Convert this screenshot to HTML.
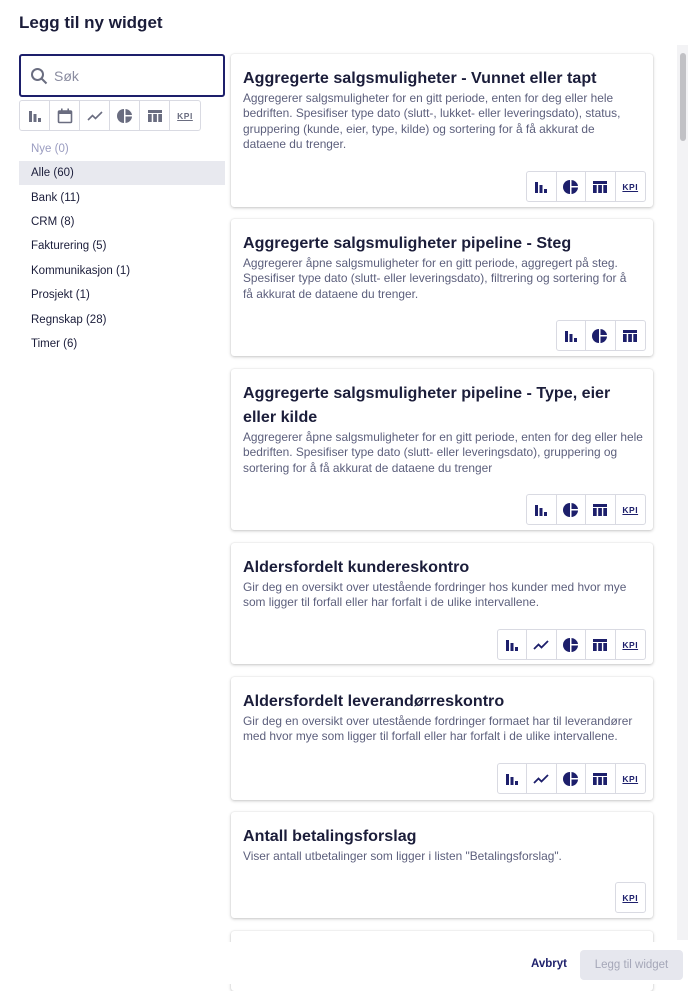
<!DOCTYPE html>
<html><head><meta charset="utf-8"><style>
*{box-sizing:border-box;margin:0;padding:0}
body{width:688px;height:984px;overflow:hidden;background:#fff;font-family:"Liberation Sans",sans-serif;position:relative;color:#1b1d3a}
h1{position:absolute;left:19px;top:13px;font-size:17px;font-weight:bold;color:#1b1d3a}
.search{position:absolute;left:19px;top:54px;width:206px;height:43px;border:2px solid #1d1f6b;border-radius:3px}
.search span{position:absolute;left:33px;top:12px;font-size:14px;color:#8a8ca0}
.filt{position:absolute;left:19px;top:100px;height:31px;display:flex;border:1px solid #d9dae2;border-radius:3px}
.filt div{width:30px;height:29px;border-right:1px solid #d9dae2;display:flex;align-items:center;justify-content:center}
.filt div:last-child{border-right:none}
.cat{position:absolute;left:19px;width:206px;height:24px;font-size:11.5px;padding:6px 12px;color:#1b1d3a}
.card{position:absolute;left:231px;width:422px;background:#fff;border-radius:3px;box-shadow:0 1px 3px rgba(0,0,0,.22),0 0 1px rgba(0,0,0,.15)}
.card h2{position:absolute;left:12px;font-size:16.1px;font-weight:bold;line-height:24px;color:#1b1d3a;width:400px;white-space:nowrap}
.card p{position:absolute;left:12px;font-size:11.9px;line-height:15.3px;color:#5c5f7c;width:410px;white-space:nowrap}
.ic{position:absolute;right:7px;height:31px;display:flex;border:1px solid #d9dae2;border-radius:3px}
.ic div{width:29.5px;height:29px;border-right:1px solid #d9dae2;display:flex;align-items:center;justify-content:center}
.ic div:last-child{border-right:none}
.kpi{font-size:8.5px;font-weight:bold;text-decoration:underline;letter-spacing:.5px;color:#1d1f6b}
.g .kpi{color:#6a6d80}
.sb{position:absolute;left:677px;top:45px;width:11px;height:895px;background:#f3f3f5}
.sb i{position:absolute;left:3px;top:8px;width:6px;height:88px;background:#c1c1c5;border-radius:3px}
.foot{position:absolute;left:0;top:942px;width:688px;height:42px;background:#fff}
</style></head><body>
<h1>Legg til ny widget</h1>
<div class="search"><svg style="position:absolute;left:9px;top:11px" width="18" height="18" viewBox="0 0 18 18"><circle cx="7.5" cy="7.5" r="5.5" fill="none" stroke="#6a6d80" stroke-width="2"/><path d="M11.5 11.5l5 5" stroke="#6a6d80" stroke-width="2"/></svg><span>Søk</span></div>
<div class="filt g">
<div><svg width="14" height="14" viewBox="0 0 14 14" fill="#6a6d80"><rect x="1" y="2" width="3" height="11"/><rect x="5.5" y="5" width="3" height="8"/><rect x="10" y="9" width="3" height="4"/></svg></div>
<div><svg width="16" height="16" viewBox="0 0 16 16"><rect x="1.5" y="3" width="13" height="11.5" rx="1" fill="none" stroke="#6a6d80" stroke-width="1.6"/><rect x="1.5" y="3" width="13" height="3" fill="#6a6d80"/><rect x="4" y="0.5" width="1.6" height="3" fill="#6a6d80"/><rect x="10.4" y="0.5" width="1.6" height="3" fill="#6a6d80"/></svg></div>
<div><svg width="16" height="12" viewBox="0 0 16 12"><path d="M1 10l4.5-4.5 3 3L15 2" fill="none" stroke="#6a6d80" stroke-width="1.6"/></svg></div>
<div><svg width="16" height="16" viewBox="0 0 16 16" fill="#6a6d80"><path d="M7 1A7 7 0 1 0 7 15Z"/><path d="M8.5 1A7 7 0 0 1 15 7H8.5Z"/><path d="M8.5 8.5H15A7 7 0 0 1 8.5 15Z"/></svg></div>
<div><svg width="16" height="14" viewBox="0 0 16 14" fill="#6a6d80"><rect x="1" y="1" width="14" height="3"/><rect x="1" y="5" width="3.7" height="8"/><rect x="6.2" y="5" width="3.7" height="8"/><rect x="11.3" y="5" width="3.7" height="8"/></svg></div>
<div><span class="kpi">KPI</span></div>
</div>
<div class="cat" style="top:137px;color:#9a9cc0">Nye (0)</div>
<div class="cat" style="top:161px;background:#e8e9ef">Alle (60)</div>
<div class="cat" style="top:186px">Bank (11)</div>
<div class="cat" style="top:210px">CRM (8)</div>
<div class="cat" style="top:234px">Fakturering (5)</div>
<div class="cat" style="top:259px">Kommunikasjon (1)</div>
<div class="cat" style="top:283px">Prosjekt (1)</div>
<div class="cat" style="top:308px">Regnskap (28)</div>
<div class="cat" style="top:332px">Timer (6)</div>

<svg width="0" height="0" style="position:absolute"><defs>
<symbol id="bar" viewBox="0 0 14 14"><g fill="#1d1f6b"><rect x="1" y="2" width="3" height="11"/><rect x="5.5" y="5" width="3" height="8"/><rect x="10" y="9" width="3" height="4"/></g></symbol>
<symbol id="line" viewBox="0 0 16 12"><path d="M1 10l4.5-4.5 3 3L15 2" fill="none" stroke="#1d1f6b" stroke-width="1.8"/></symbol>
<symbol id="pie" viewBox="0 0 16 16"><g fill="#1d1f6b"><path d="M7 1A7 7 0 1 0 7 15Z"/><path d="M8.5 1A7 7 0 0 1 15 7H8.5Z"/><path d="M8.5 8.5H15A7 7 0 0 1 8.5 15Z"/></g></symbol>
<symbol id="tab" viewBox="0 0 16 14"><g fill="#1d1f6b"><rect x="1" y="1" width="14" height="3"/><rect x="1" y="5" width="3.7" height="8"/><rect x="6.2" y="5" width="3.7" height="8"/><rect x="11.3" y="5" width="3.7" height="8"/></g></symbol>
</defs></svg>

<div class="card" style="top:54px;height:153px">
<h2 style="top:12px">Aggregerte salgsmuligheter - Vunnet eller tapt</h2>
<p style="top:37px">Aggregerer salgsmuligheter for en gitt periode, enten for deg eller hele<br>bedriften. Spesifiser type dato (slutt-, lukket- eller leveringsdato), status,<br>gruppering (kunde, eier, type, kilde) og sortering for å få akkurat de<br>dataene du trenger.</p>
<div class="ic" style="top:117px"><div><svg width="14" height="14"><use href="#bar"/></svg></div><div><svg width="16" height="16"><use href="#pie"/></svg></div><div><svg width="16" height="14"><use href="#tab"/></svg></div><div><span class="kpi">KPI</span></div></div>
</div>

<div class="card" style="top:219px;height:137px">
<h2 style="top:12px">Aggregerte salgsmuligheter pipeline - Steg</h2>
<p style="top:37px">Aggregerer åpne salgsmuligheter for en gitt periode, aggregert på steg.<br>Spesifiser type dato (slutt- eller leveringsdato), filtrering og sortering for å<br>få akkurat de dataene du trenger.</p>
<div class="ic" style="top:101px"><div><svg width="14" height="14"><use href="#bar"/></svg></div><div><svg width="16" height="16"><use href="#pie"/></svg></div><div><svg width="16" height="14"><use href="#tab"/></svg></div></div>
</div>

<div class="card" style="top:369px;height:161px">
<h2 style="top:12px">Aggregerte salgsmuligheter pipeline - Type, eier<br>eller kilde</h2>
<p style="top:61px">Aggregerer åpne salgsmuligheter for en gitt periode, enten for deg eller hele<br>bedriften. Spesifiser type dato (slutt- eller leveringsdato), gruppering og<br>sortering for å få akkurat de dataene du trenger</p>
<div class="ic" style="top:125px"><div><svg width="14" height="14"><use href="#bar"/></svg></div><div><svg width="16" height="16"><use href="#pie"/></svg></div><div><svg width="16" height="14"><use href="#tab"/></svg></div><div><span class="kpi">KPI</span></div></div>
</div>

<div class="card" style="top:543px;height:121px">
<h2 style="top:12px">Aldersfordelt kundereskontro</h2>
<p style="top:37px">Gir deg en oversikt over utestående fordringer hos kunder med hvor mye<br>som ligger til forfall eller har forfalt i de ulike intervallene.</p>
<div class="ic" style="top:86px"><div><svg width="14" height="14"><use href="#bar"/></svg></div><div><svg width="16" height="12"><use href="#line"/></svg></div><div><svg width="16" height="16"><use href="#pie"/></svg></div><div><svg width="16" height="14"><use href="#tab"/></svg></div><div><span class="kpi">KPI</span></div></div>
</div>

<div class="card" style="top:677px;height:123px">
<h2 style="top:12px">Aldersfordelt leverandørreskontro</h2>
<p style="top:37px">Gir deg en oversikt over utestående fordringer formaet har til leverandører<br>med hvor mye som ligger til forfall eller har forfalt i de ulike intervallene.</p>
<div class="ic" style="top:86px"><div><svg width="14" height="14"><use href="#bar"/></svg></div><div><svg width="16" height="12"><use href="#line"/></svg></div><div><svg width="16" height="16"><use href="#pie"/></svg></div><div><svg width="16" height="14"><use href="#tab"/></svg></div><div><span class="kpi">KPI</span></div></div>
</div>

<div class="card" style="top:812px;height:106px">
<h2 style="top:12px">Antall betalingsforslag</h2>
<p style="top:37px">Viser antall utbetalinger som ligger i listen "Betalingsforslag".</p>
<div class="ic" style="top:70px"><div><span class="kpi">KPI</span></div></div>
</div>

<div class="card" style="top:931px;height:60px"></div>
<div class="sb"><i></i></div>
<div class="foot">
<span style="position:absolute;left:531px;top:16px;font-size:11.5px;font-weight:bold;color:#1d1f6b">Avbryt</span>
<div style="position:absolute;left:580px;top:8px;width:103px;height:30px;background:#e6e7ee;border-radius:4px;font-size:11.5px;color:#a5a7b8;text-align:center;line-height:30px">Legg til widget</div>
</div>
</body></html>
